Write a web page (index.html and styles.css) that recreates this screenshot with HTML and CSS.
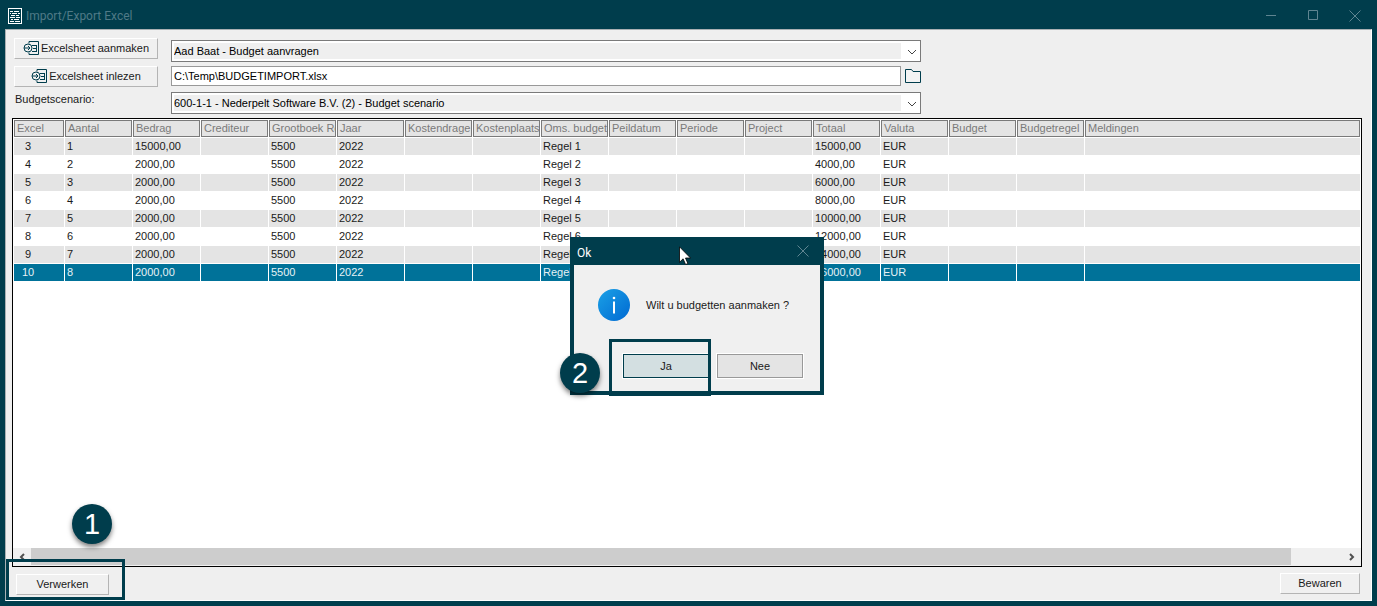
FILE: index.html
```html
<!DOCTYPE html>
<html lang="nl">
<head>
  <meta charset="UTF-8">
  <meta name="viewport" content="width=device-width, initial-scale=1">
  <title>Import/Export Excel</title>
  <link rel="stylesheet" href="styles.css">
</head>
<body>

<header class="titlebar">
  <svg class="app-icon" width="14" height="16" viewBox="0 0 14 16" fill="none" stroke="#fff" shape-rendering="crispEdges">
    <rect x="0.5" y="0.5" width="13" height="15"/>
    <path d="M2 3.5h3M6 3.5h5M2 5.5h1M4 5.5h5M10 5.5h2M3 7.5h4M8 7.5h3M2 9.5h5M8 9.5h4M3 11.5h2M6 11.5h5M2 13.5h4M7 13.5h5"/>
  </svg>
  <h1>Import/Export Excel</h1>
  <div class="window-buttons">
    <button type="button" aria-label="Minimaliseren"><svg width="12" height="12" viewBox="0 0 12 12"><path d="M1 5.5h10"/></svg></button>
    <button type="button" aria-label="Maximaliseren"><svg width="12" height="12" viewBox="0 0 12 12"><path d="M1.500.5h9v9h-9z"/></svg></button>
    <button type="button" aria-label="Sluiten"><svg width="12" height="12" viewBox="0 0 12 12"><path d="M.5.5l11 11M11.500.5l-11 11"/></svg></button>
  </div>
</header>

<main class="panel">
  <form class="form">
    <button type="button" class="btn">
      <svg class="sheet-icon" width="16" height="15" viewBox="0 0 16 15"><path d="M6 2.500V.5h9.500v13H6v-2M9 4.500h4.500M10 7.500h3.500M9 10.500h4.500M13.500 4v7"/><circle cx="5" cy="7" r="4"/><path d="M1 7h6M5 5l2 2-2 2"/></svg>
      Excelsheet aanmaken
    </button>
    <div class="combo">
      <select aria-label="Budget"><option>Aad Baat - Budget aanvragen</option></select>
      <svg class="chevron" width="10" height="6" viewBox="0 0 10 6"><path d="M1 1l4 4 4-4"/></svg>
    </div>

    <button type="button" class="btn">
      <svg class="sheet-icon" width="16" height="15" viewBox="0 0 16 15"><path d="M6 2.500V.5h9.500v13H6v-2M9 4.500h4.500M10 7.500h3.500M9 10.500h4.500M13.500 4v7"/><circle cx="5" cy="7" r="4"/><path d="M1 7h6M5 5l2 2-2 2"/></svg>
      Excelsheet inlezen
    </button>
    <div class="file-row">
      <input type="text" aria-label="Bestand" value="C:\Temp\BUDGETIMPORT.xlsx">
      <button type="button" class="folder" aria-label="Bladeren"><svg width="16" height="15" viewBox="0 0 16 15"><path d="M.5.5h6l1.500 2h7.500v11H.5z"/></svg></button>
    </div>

    <label for="scenario">Budgetscenario:</label>
    <div class="combo">
      <select id="scenario"><option>600-1-1 - Nederpelt Software B.V. (2) - Budget scenario</option></select>
      <svg class="chevron" width="10" height="6" viewBox="0 0 10 6"><path d="M1 1l4 4 4-4"/></svg>
    </div>
  </form>

  <section class="grid">
    <div class="grid-body">
      <table>
        <colgroup>
          <col class="col-excel"><col span="15" class="col"><col>
        </colgroup>
        <thead>
          <tr>
            <th>Excel</th><th>Aantal</th><th>Bedrag</th><th>Crediteur</th><th>Grootboek Re</th><th>Jaar</th>
            <th>Kostendrage</th><th>Kostenplaats</th><th>Oms. budget</th><th>Peildatum</th><th>Periode</th>
            <th>Project</th><th>Totaal</th><th>Valuta</th><th>Budget</th><th>Budgetregel</th><th>Meldingen</th>
          </tr>
        </thead>
        <tbody>
          <tr><td>3</td><td>1</td><td>15000,00</td><td></td><td>5500</td><td>2022</td><td></td><td></td><td>Regel 1</td><td></td><td></td><td></td><td>15000,00</td><td>EUR</td><td></td><td></td><td></td></tr>
          <tr><td>4</td><td>2</td><td>2000,00</td><td></td><td>5500</td><td>2022</td><td></td><td></td><td>Regel 2</td><td></td><td></td><td></td><td>4000,00</td><td>EUR</td><td></td><td></td><td></td></tr>
          <tr><td>5</td><td>3</td><td>2000,00</td><td></td><td>5500</td><td>2022</td><td></td><td></td><td>Regel 3</td><td></td><td></td><td></td><td>6000,00</td><td>EUR</td><td></td><td></td><td></td></tr>
          <tr><td>6</td><td>4</td><td>2000,00</td><td></td><td>5500</td><td>2022</td><td></td><td></td><td>Regel 4</td><td></td><td></td><td></td><td>8000,00</td><td>EUR</td><td></td><td></td><td></td></tr>
          <tr><td>7</td><td>5</td><td>2000,00</td><td></td><td>5500</td><td>2022</td><td></td><td></td><td>Regel 5</td><td></td><td></td><td></td><td>10000,00</td><td>EUR</td><td></td><td></td><td></td></tr>
          <tr><td>8</td><td>6</td><td>2000,00</td><td></td><td>5500</td><td>2022</td><td></td><td></td><td>Regel 6</td><td></td><td></td><td></td><td>12000,00</td><td>EUR</td><td></td><td></td><td></td></tr>
          <tr><td>9</td><td>7</td><td>2000,00</td><td></td><td>5500</td><td>2022</td><td></td><td></td><td>Regel 7</td><td></td><td></td><td></td><td>14000,00</td><td>EUR</td><td></td><td></td><td></td></tr>
          <tr class="selected"><td>10</td><td>8</td><td>2000,00</td><td></td><td>5500</td><td>2022</td><td></td><td></td><td>Regel 8</td><td></td><td></td><td></td><td>16000,00</td><td>EUR</td><td></td><td></td><td></td></tr>
        </tbody>
      </table>
    </div>
    <div class="scrollbar">
      <button type="button" aria-label="Naar links"><svg width="6" height="8" viewBox="0 0 6 8"><path d="M5 1L2 4l3 3"/></svg></button>
      <div class="track"><div class="thumb"></div></div>
      <button type="button" aria-label="Naar rechts"><svg width="6" height="8" viewBox="0 0 6 8"><path d="M1 1l3 3-3 3"/></svg></button>
    </div>
  </section>

  <footer class="actions">
    <div class="step-one">
      <button type="button" class="btn btn-process">Verwerken</button>
      <span class="mark"></span>
      <span class="badge">1</span>
    </div>
    <button type="button" class="btn btn-save">Bewaren</button>
  </footer>
</main>

<div class="dialog" role="dialog" aria-labelledby="dialog-title">
  <div class="dialog-title">
    <h2 id="dialog-title">Ok</h2>
    <button type="button" aria-label="Sluiten"><svg width="12" height="12" viewBox="0 0 12 12"><path d="M.5.5l11 11M11.500.5l-11 11"/></svg></button>
  </div>
  <div class="dialog-body">
    <div class="message">
      <svg width="32" height="32" viewBox="0 0 32 32">
        <defs><linearGradient id="blue" x1="0" y1="0" x2="1" y2="1"><stop offset="0" stop-color="#1ba1e6"/><stop offset="1" stop-color="#0069d2"/></linearGradient></defs>
        <circle cx="16" cy="16" r="16" fill="url(#blue)"/>
        <circle cx="16" cy="9" r="1.300" fill="#fff"/>
        <path d="M16 12.500v12" stroke="#fff" stroke-width="2"/>
      </svg>
      <p>Wilt u budgetten aanmaken ?</p>
    </div>
    <div class="choices">
      <button type="button" class="choice choice-yes">Ja</button>
      <button type="button" class="choice">Nee</button>
      <span class="mark"></span>
      <span class="badge">2</span>
    </div>
  </div>
  <svg class="cursor" width="12" height="19" viewBox="0 0 12 19"><path d="M.5.8v15.500l3.600-3.500 2.500 5.700 2.300-1-2.400-5.500h5z" fill="#fff" stroke="#000" stroke-width=".8"/></svg>
</div>

</body>
</html>
```
FILE: styles.css
```css
* { box-sizing: border-box; }
body { margin: 0; min-height: 100vh; padding: 0 5px 5px; display: flex; flex-direction: column; background: #003d4c; color: #1a1a1a; font: 11px/13px "Liberation Sans", Arial, sans-serif; }
button, input, select { font: inherit; color: inherit; margin: 0; border-radius: 0; }
button { padding: 0; white-space: nowrap; }
svg { display: block; flex: none; }
h1, h2, p { margin: 0; }

.titlebar { height: 29px; display: flex; align-items: center; padding: 2px 0 0 3px; gap: 4px; }
.titlebar h1 { flex: 1; padding-top: 1px; font: 12px/16px Roboto, "Noto Sans", sans-serif; color: #4f7a87; }
.window-buttons { display: flex; margin-right: -4px; }
.window-buttons button, .dialog-title button { width: 42px; height: 24px; display: flex; align-items: center; justify-content: center; border: none; background: none; }
.window-buttons svg, .dialog-title svg { fill: none; stroke: #5f8591; }

.panel { flex: 1; display: flex; flex-direction: column; background: #efefef; padding: 8px 9px 0 6px; border: 1px solid #fff; border-top-color: #a9b0b3; border-left-color: #a9b0b3; }
.form { display: grid; grid-template-columns: 144px minmax(0, 750px); grid-template-rows: 24px 22px 22px; gap: 4px 13px; padding-left: 2px; }
.form label { padding: 1px; }
.btn { height: 21px; display: flex; align-items: center; justify-content: center; gap: 2px; background: #f0f0f0; border: 1px solid #fff; border-right-color: #b4b4b4; border-bottom-color: #b4b4b4; }
.sheet-icon { fill: none; stroke: #003d4c; }

.combo { position: relative; height: 22px; align-self: end; }
.combo select { width: 100%; height: 22px; appearance: none; border: 1px solid #7a7a7a; padding: 2px 19px 2px 2px; background: linear-gradient(#efefef, #efefef) content-box, #fff; color: #000; line-height: 14px; }
.chevron { position: absolute; right: 4px; top: 9px; fill: none; stroke: #444; pointer-events: none; }
.file-row { display: flex; gap: 4px; }
.file-row input { flex: 1; height: 20px; border: 1px solid #999; padding: 0 2px; background: #fff; color: #000; }
.folder { height: 20px; border: none; background: none; }
.folder svg { fill: #f3f3f3; stroke: #003d4c; }

.grid { flex: 1; display: flex; flex-direction: column; margin-top: 4px; border: 1px solid #000; background: #fff; }
.grid-body { flex: 1; overflow: hidden; }
table { width: 100%; table-layout: fixed; border-collapse: separate; border-spacing: 1px; }
.col-excel { width: 50px; }
.col { width: 67px; }
th, td { height: 17px; padding: 0 0 0 2px; line-height: 15px; text-align: left; white-space: nowrap; overflow: hidden; text-overflow: clip; }
th { border: 1px solid #7a7a7a; background: #e4e4e4; color: #7a7a7a; font-weight: normal; }
td:first-child { text-align: center; padding-right: 24px; }
tbody tr:nth-child(odd) td { background: #e4e4e4; }
tbody tr.selected td { background: #007299; color: #e6f1f5; }

.scrollbar { display: flex; height: 18px; background: #f0f0f0; }
.scrollbar button { width: 18px; display: flex; align-items: center; justify-content: center; border: none; background: none; }
.scrollbar svg { fill: none; stroke: #505050; stroke-width: 2; }
.track { flex: 1; }
.thumb { width: 96%; height: 17px; background: #cdcdcd; }

.actions { display: flex; justify-content: space-between; align-items: flex-start; height: 33px; padding: 6px 2px 0 4px; }
.step-one { position: relative; }
.btn-process { width: 93px; margin-top: 1px; }
.btn-save { width: 80px; }
.mark { position: absolute; border: 3px solid #003d4c; pointer-events: none; }
.step-one .mark { left: -10px; top: -14px; width: 119px; height: 41px; }
.badge { position: absolute; width: 40px; height: 40px; border-radius: 50%; background: #003d4c; color: #fff; font-size: 29px; line-height: 40px; text-align: center; box-shadow: 0 3px 5px rgba(0,0,0,0.5); }
.step-one .badge { left: 56px; top: -69px; }

.dialog { position: absolute; left: 570px; top: 237px; width: 254px; background: #f0f0f0; border: 4px solid #003d4c; border-top: none; }
.dialog-title { display: flex; align-items: center; justify-content: space-between; height: 28px; padding-left: 3px; background: #003d4c; color: #fff; }
.dialog-title h2 { font: 12px/16px Roboto, "Noto Sans", sans-serif; padding-top: 3px; }
.dialog-title button { width: 34px; }
.dialog-body { padding: 24px 17px 13px 24px; }
.message { display: flex; align-items: center; gap: 16px; }
.choices { position: relative; display: flex; justify-content: flex-end; gap: 8px; margin-top: 33px; }
.choice { width: 86px; height: 24px; border: 1px solid #999; background: #e4e4e4; outline: 1px solid #fff; }
.choice-yes { border-color: #003d4c; background: #d3dfe1; }
.choices .mark { left: 11px; top: -15px; width: 102px; height: 57px; }
.choices .badge { left: -38px; top: -1px; }
.cursor { position: absolute; left: 105px; top: 9px; }
```
